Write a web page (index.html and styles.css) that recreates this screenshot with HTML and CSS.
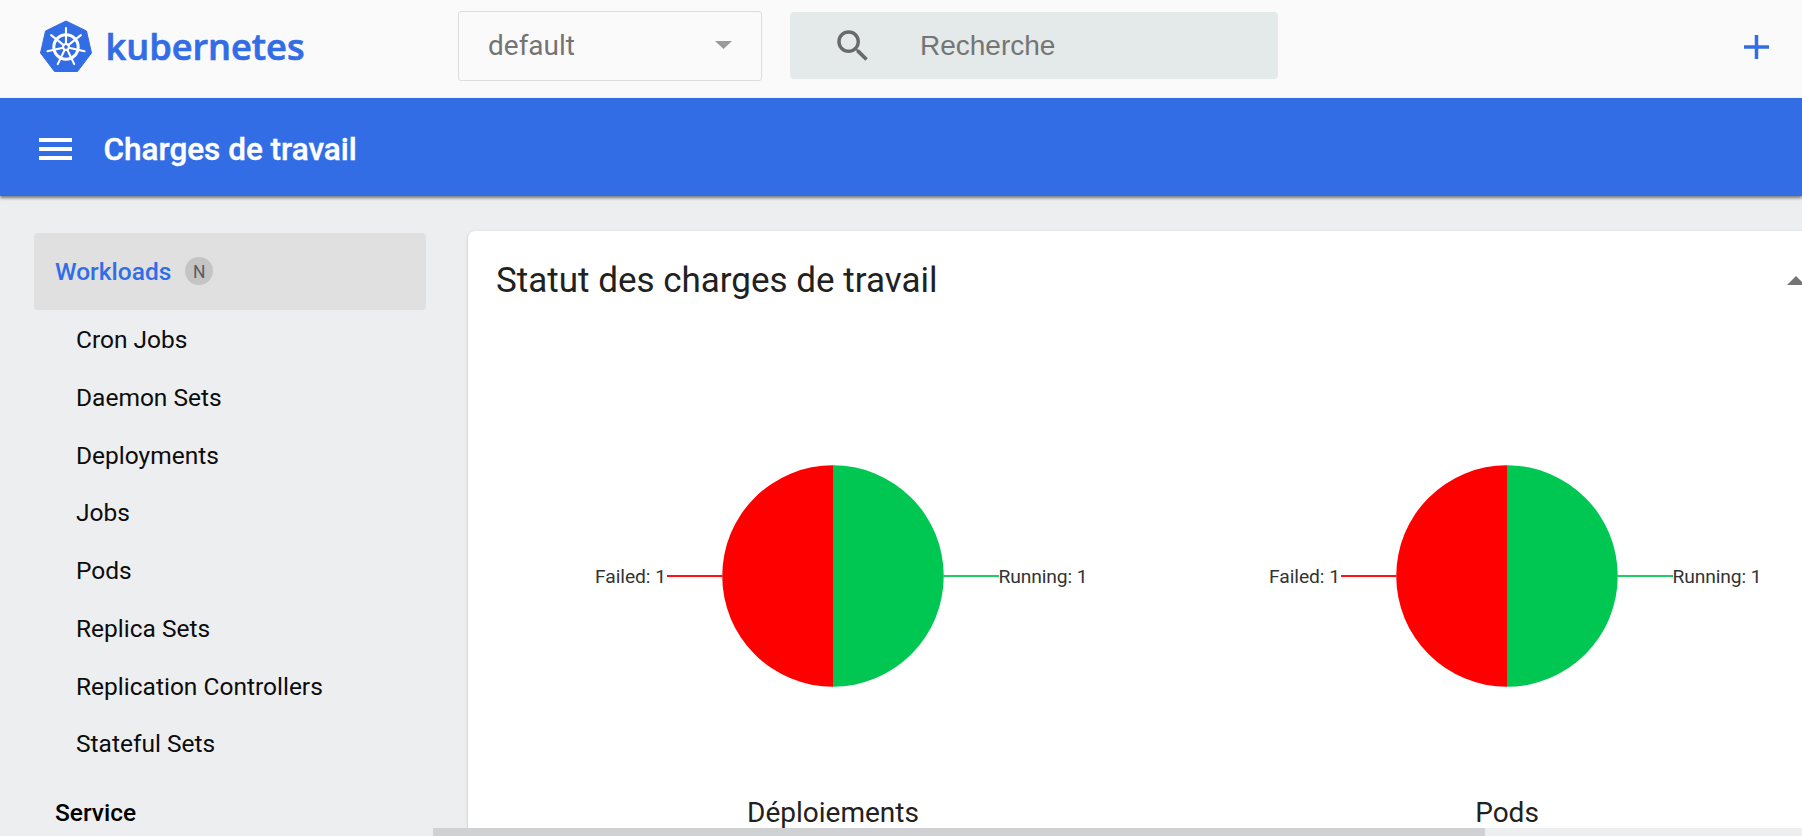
FILE: index.html
```html
<!DOCTYPE html>
<html lang="fr">
<head>
<meta charset="utf-8">
<title>Kubernetes Dashboard</title>
<link rel="stylesheet" href="styles.css">
</head>
<body>
<div class="app">
  <header class="topbar">
    <svg class="logo" width="270" height="56" viewBox="0 0 270 56">
      <path class="logo-badge" d="M26 1 L46.500 11 L51.500 33 L37.500 51.500 H14.500 L0.500 33 L5.500 11 Z"/>
      <g class="wheel" transform="translate(26 27)">
        <circle r="12.200" stroke-width="3"/>
        <g stroke-width="2.100">
          <path d="M0 -3V-19"/>
          <path d="M0 -3V-19" transform="rotate(51.430)"/>
          <path d="M0 -3V-19" transform="rotate(102.860)"/>
          <path d="M0 -3V-19" transform="rotate(154.290)"/>
          <path d="M0 -3V-19" transform="rotate(205.710)"/>
          <path d="M0 -3V-19" transform="rotate(257.140)"/>
          <path d="M0 -3V-19" transform="rotate(308.570)"/>
        </g>
        <circle r="2.900" stroke-width="2"/>
      </g>
      <text class="logo-text" x="65.500" y="39.500" textLength="199" lengthAdjust="spacingAndGlyphs">kubernetes</text>
    </svg>
    <div class="namespace">
      <span class="namespace-value">default</span>
      <svg width="17" height="8" viewBox="0 0 17 8"><path d="M0 0H17L8.500 8Z" fill="#9a9a9a"/></svg>
    </div>
    <div class="search">
      <svg class="search-icon" width="42" height="42" viewBox="0 0 24 24"><path fill="#696b6b" d="M15.500 14h-.79l-.28-.27A6.471 6.471 0 0 0 16 9.500 6.500 6.500 0 1 0 9.500 16c1.610 0 3.090-.59 4.230-1.570l.27.28v.79l5 4.990L20.490 19l-4.990-5zm-6 0C7.010 14 5 11.990 5 9.500S7.010 5 9.500 5 14 7.010 14 9.500 11.990 14 9.500 14z"/></svg>
      <span class="search-placeholder">Recherche</span>
    </div>
    <svg class="add" width="25" height="24" viewBox="0 0 25 24"><path d="M0 12H25M12.500 0V24"/></svg>
  </header>

  <div class="actionbar">
    <svg class="menu" width="33" height="22" viewBox="0 0 33 22"><path fill="#fff" d="M0 0H33V4H0ZM0 9H33V13H0ZM0 18H33V22H0Z"/></svg>
    <h1 class="page-title">Charges de travail</h1>
  </div>

  <div class="body">
    <nav class="sidebar">
      <a class="group active"><span>Workloads</span><span class="badge">N</span></a>
      <a class="item">Cron Jobs</a>
      <a class="item">Daemon Sets</a>
      <a class="item">Deployments</a>
      <a class="item">Jobs</a>
      <a class="item">Pods</a>
      <a class="item">Replica Sets</a>
      <a class="item">Replication Controllers</a>
      <a class="item">Stateful Sets</a>
      <a class="group">Service</a>
    </nav>

    <main class="main">
      <section class="card">
        <div class="card-head">
          <h2 class="card-title">Statut des charges de travail</h2>
          <svg class="collapse" width="18" height="9" viewBox="0 0 18 9"><path d="M0 9L9 0L18 9Z" fill="#757575"/></svg>
        </div>
        <div class="charts">
          <figure class="chart">
            <svg width="674" height="260" viewBox="-337 -130 674 260">
              <path d="M0 -110.800A110.800 110.800 0 0 0 0 110.800Z" fill="#f00"/>
              <path d="M0 -110.800A110.800 110.800 0 0 1 0 110.800Z" fill="#00c752"/>
              <path d="M-166 0H-110.500" stroke="#ff1212" stroke-width="2"/>
              <path d="M110.500 0H166" stroke="#1dcd66" stroke-width="2"/>
              <text class="label" x="-238" y="7" textLength="71">Failed: 1</text>
              <text class="label" x="165.500" y="7" textLength="89">Running: 1</text>
            </svg>
            <figcaption class="caption">Déploiements</figcaption>
          </figure>
          <figure class="chart">
            <svg width="674" height="260" viewBox="-337 -130 674 260">
              <path d="M0 -110.800A110.800 110.800 0 0 0 0 110.800Z" fill="#f00"/>
              <path d="M0 -110.800A110.800 110.800 0 0 1 0 110.800Z" fill="#00c752"/>
              <path d="M-166 0H-110.500" stroke="#ff1212" stroke-width="2"/>
              <path d="M110.500 0H166" stroke="#1dcd66" stroke-width="2"/>
              <text class="label" x="-238" y="7" textLength="71">Failed: 1</text>
              <text class="label" x="165.500" y="7" textLength="89">Running: 1</text>
            </svg>
            <figcaption class="caption">Pods</figcaption>
          </figure>
        </div>
      </section>
      <div class="scrollbar"><div class="thumb"></div></div>
    </main>
  </div>
</div>
</body>
</html>
```
FILE: styles.css
```css
* { box-sizing: border-box; }
body { margin: 0; overflow: hidden; font-family: Roboto, sans-serif; }
svg { display: block; flex: none; }

.app { height: 836px; display: flex; flex-direction: column; background: #edeef0; overflow: hidden; }

.topbar { height: 98px; flex: none; display: flex; align-items: flex-start; padding-left: 40px; background: #fafafa; }
.logo { margin-top: 19.500px; }
.logo-badge { fill: #326de6; stroke: #326de6; stroke-width: 1; stroke-linejoin: round; }
.wheel { fill: none; stroke: #fff; stroke-linecap: round; }
.logo-text { font: 600 36px "Open Sans", sans-serif; fill: #326de6; stroke: #326de6; stroke-width: .7; }

.namespace { width: 304px; height: 70px; margin: 11px 0 0 148px; padding: 0 29px; border: 1px solid #dcdddd; border-radius: 3px; display: flex; align-items: center; justify-content: space-between; }
.namespace-value { font-size: 28px; color: #747474; line-height: 36px; }
.namespace svg { margin-top: -2px; }

.search { width: 488px; height: 67px; margin: 12px 0 0 28px; padding-left: 42px; border-radius: 4px; background: #e4e9e9; display: flex; align-items: center; }
.search-placeholder { margin-left: 46px; font: 28px/36px "Liberation Sans", sans-serif; color: #757575; }
.add { margin: 35px 33px 0 auto; stroke: #326de6; stroke-width: 3.500; }

.actionbar { position: relative; height: 98px; flex: none; display: flex; align-items: center; padding-left: 38.500px; background: #326de6; box-shadow: 0 2px 3px rgba(0, 0, 0, .5); }
.menu { margin-top: 3px; }
.page-title { margin: 5px 0 0 32px; font-size: 31.500px; font-weight: 500; line-height: 40px; color: #fff; -webkit-text-stroke: .4px #fff; }

.body { flex: 1; min-height: 0; display: flex; }
.sidebar { width: 433px; flex: none; padding: 37px 7px 0 34px; color: #0c0c0c; font-size: 24.500px; }
.group { height: 77px; display: flex; align-items: center; gap: 14px; padding-left: 21px; border-radius: 4px; font-weight: 500; color: #000; }
.group.active { width: 392px; background: #e0e0e0; color: #326de6; }
.group:last-child { padding-top: 3px; }
.badge { width: 28px; height: 28px; margin-top: -1px; border-radius: 50%; background: #c4c4c4; color: #5c5c5c; font-size: 17.500px; font-weight: 400; line-height: 30px; text-align: center; }
.item { display: block; height: 57.750px; line-height: 59px; padding-left: 42px; }

.main { flex: 1; min-width: 0; display: flex; flex-direction: column; overflow: hidden; padding-top: 35px; }
.card { flex: 1; min-height: 0; width: 1420px; margin-left: 35px; border-radius: 7px 7px 0 0; background: #fff; box-shadow: 0 1px 3px rgba(0, 0, 0, .22); overflow: hidden; }
.card-head { display: flex; align-items: center; height: 98px; padding-left: 28px; }
.card-title { margin: 2px 0 0; width: 1291px; font-size: 35px; font-weight: 400; line-height: 44px; color: #212121; white-space: nowrap; }
.collapse { margin-top: 1px; }
.charts { display: flex; padding: 117px 0 0 28px; }
.chart { width: 674px; flex: none; margin: 0; }
.label { font-size: 19.250px; fill: #333; }
.caption { margin-top: 89px; text-align: center; font-size: 28px; line-height: 36px; color: #212121; }
.scrollbar { height: 8px; flex: none; background: #edeef0; }
.thumb { width: 1052px; height: 8px; background: #d0d1d3; }
```
